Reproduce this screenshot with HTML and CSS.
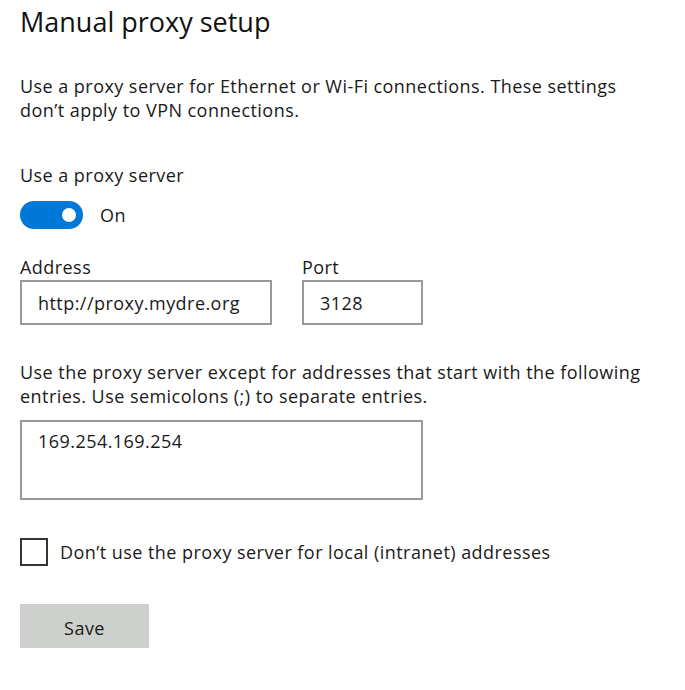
FILE: index.html
```html
<!DOCTYPE html>
<html lang="en">
<head>
<meta charset="utf-8">
<title>Manual proxy setup</title>
<link rel="stylesheet" href="styles.css">
</head>
<body>
<main class="page">
  <h1 class="title">Manual proxy setup</h1>
  <p class="desc">Use a proxy server for Ethernet or Wi-Fi connections. These settings don’t apply to VPN connections.</p>

  <div class="setting-label">Use a proxy server</div>
  <div class="toggle-row">
    <span class="toggle"><span class="knob"></span></span>
    <span class="toggle-text">On</span>
  </div>

  <div class="fields">
    <label class="field field-address">
      <span class="field-label">Address</span>
      <span class="box">http://proxy.mydre.org</span>
    </label>
    <label class="field field-port">
      <span class="field-label">Port</span>
      <span class="box">3128</span>
    </label>
  </div>

  <p class="desc except">Use the proxy server except for addresses that start with the following entries. Use semicolons (;) to separate entries.</p>
  <div class="area">169.254.169.254</div>

  <div class="check-row">
    <span class="checkbox"></span>
    <span class="check-text">Don’t use the proxy server for local (intranet) addresses</span>
  </div>

  <button class="save" type="button">Save</button>
</main>
</body>
</html>
```
FILE: styles.css
```css
html, body {
  margin: 0;
  padding: 0;
  background: #ffffff;
}
body {
  font-family: "Open Sans", "Noto Sans", sans-serif;
  color: #000;
}
.page {
  padding: 4px 20px 0 20px;
  width: 628px;
  font-size: 18px;
  letter-spacing: 0.45px;
}
.title {
  margin: 0;
  font-size: 27px;
  font-weight: 400;
  line-height: 36px;
  letter-spacing: 0;
  color: #111;
}
.desc {
  margin: 34px 0 0 0;
  line-height: 24px;
  color: #1a1a1a;
}
.setting-label {
  margin-top: 41px;
  line-height: 24px;
  color: #1a1a1a;
}
.toggle-row {
  margin-top: 14px;
  display: flex;
  align-items: center;
  gap: 17px;
  height: 28px;
}
.toggle {
  position: relative;
  width: 63px;
  height: 28px;
  border-radius: 14px;
  background: #0078d7;
  flex: none;
}
.knob {
  position: absolute;
  right: 7px;
  top: 7px;
  width: 14px;
  height: 14px;
  border-radius: 50%;
  background: #fff;
}
.toggle-text {
  line-height: 24px;
  color: #1a1a1a;
}
.fields {
  margin-top: 26px;
  display: flex;
  gap: 30px;
}
.field {
  display: flex;
  flex-direction: column;
  gap: 1px;
}
.field-label {
  line-height: 24px;
  color: #1a1a1a;
}
.box {
  box-sizing: border-box;
  height: 45px;
  border: 2px solid #999;
  padding: 0 0 0 16px;
  display: flex;
  align-items: center;
  color: #1a1a1a;
}
.field-address .box { width: 252px; }
.field-port .box { width: 121px; }
.except {
  margin-top: 35px;
}
.area {
  box-sizing: border-box;
  margin-top: 12px;
  width: 403px;
  height: 80px;
  border: 2px solid #999;
  padding: 7px 16px;
  line-height: 24px;
  color: #1a1a1a;
}
.check-row {
  margin-top: 38px;
  display: flex;
  align-items: center;
  gap: 12px;
}
.checkbox {
  box-sizing: border-box;
  width: 28px;
  height: 28px;
  border: 2px solid #333;
  flex: none;
}
.check-text {
  line-height: 24px;
  color: #1a1a1a;
}
.save {
  display: block;
  margin-top: 38px;
  width: 129px;
  height: 44px;
  border: none;
  background: #cdd0cd;
  font-family: inherit;
  font-size: 18px;
  letter-spacing: 0.45px;
  color: #1a1a1a;
  padding: 3px 0 0 0;
}
```
